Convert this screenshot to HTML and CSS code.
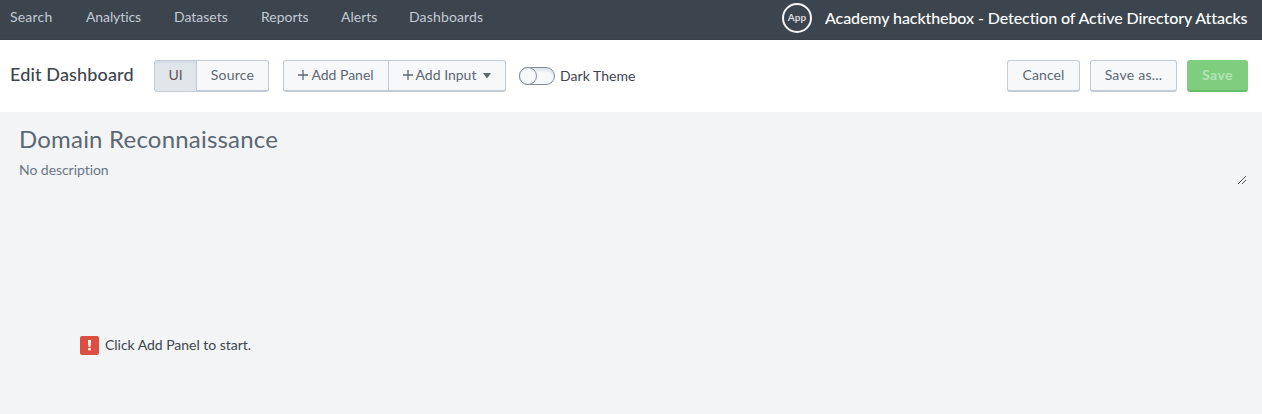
FILE: index.html
```html
<!DOCTYPE html>
<html lang="en">
<head>
<meta charset="utf-8">
<title>Edit Dashboard</title>
<link rel="stylesheet" href="styles.css">
</head>
<body>
<header class="appbar">
  <nav class="nav">
    <a class="nav-search">Search</a>
    <a class="nav-analytics">Analytics</a>
    <a class="nav-datasets">Datasets</a>
    <a class="nav-reports">Reports</a>
    <a class="nav-alerts">Alerts</a>
    <a class="nav-dashboards">Dashboards</a>
  </nav>
  <div class="app">
    <span class="app-icon">App</span>
    <span class="app-name">Academy hackthebox - Detection of Active Directory Attacks</span>
  </div>
</header>
<div class="toolbar">
  <h1 class="edit-title">Edit Dashboard</h1>
  <div class="group">
    <button class="btn btn-ui active">UI</button>
    <button class="btn btn-source">Source</button>
  </div>
  <div class="group group-add">
    <button class="btn btn-panel"><svg class="plus" viewBox="0 0 10 10"><path d="M5 0v10M0 5h10"/></svg><span>Add Panel</span></button>
    <button class="btn btn-input"><svg class="plus" viewBox="0 0 10 10"><path d="M5 0v10M0 5h10"/></svg><span>Add Input</span><svg class="caret" viewBox="0 0 8 5"><path d="M0 0h8L4.6 4.7q-.6.6-1.2 0z"/></svg></button>
  </div>
  <span class="switch"><span class="knob"></span></span>
  <span class="theme-label">Dark Theme</span>
  <div class="actions">
    <button class="btn btn-cancel">Cancel</button>
    <button class="btn btn-saveas">Save as...</button>
    <button class="btn btn-save">Save</button>
  </div>
</div>
<main class="content">
  <h2 class="title">Domain Reconnaissance</h2>
  <div class="description">
    <span class="description-text">No description</span>
    <svg class="grip" viewBox="0 0 8 8" shape-rendering="crispEdges"><path d="M0 7h1v1H0zM1 6h1v1H1zM2 5h1v1H2zM3 4h1v1H3zM4 3h1v1H4zM5 2h1v1H5zM6 1h1v1H6zM7 0h1v1H7zM4 7h1v1H4zM5 6h1v1H5zM6 5h1v1H6zM7 4h1v1H7z"/></svg>
  </div>
  <div class="message">
    <svg class="alert" viewBox="0 0 19 19"><rect width="19" height="19" rx="2"/><path d="M8 4h3l-.5 7h-2z"/><circle cx="9.5" cy="13.2" r="1.4"/></svg>
    <span class="message-text">Click Add Panel to start.</span>
  </div>
</main>
</body>
</html>
```
FILE: styles.css
```css
* { box-sizing: border-box; }
body {
  margin: 0;
  height: 414px;
  overflow: hidden;
  background: #f2f4f5;
  color: #3c444d;
  font: 14px/20px Lato, "Open Sans", sans-serif;
  font-variant-ligatures: none;
  white-space: nowrap;
}
h1, h2 { margin: 0; }
.appbar {
  display: flex;
  justify-content: space-between;
  height: 40px;
  padding: 0 14px 0 10px;
  background: #3c444d;
  border-bottom: 1px solid #384049;
}
.nav { display: flex; padding-top: 7px; color: #c3cbd4; }
.nav-search { width: 76px; letter-spacing: .2px; }
.nav-analytics { width: 88px; letter-spacing: -.1px; }
.nav-datasets { width: 87px; }
.nav-reports { width: 80px; }
.nav-alerts { width: 68px; }
.nav-dashboards { letter-spacing: .15px; }
.app { display: flex; padding-top: 3px; }
.app-icon {
  width: 30px;
  height: 30px;
  margin-right: 13px;
  border: 2px solid #f4f5f6;
  border-radius: 50%;
  color: #d8dbde;
  font-size: 10px;
  font-weight: 700;
  line-height: 25px;
  text-align: center;
}
.app-name {
  width: 423px;
  padding-top: 5px;
  color: #fff;
  font-size: 16px;
  font-weight: 500;
  letter-spacing: -.09px;
}
.toolbar {
  display: flex;
  height: 72px;
  padding: 20px 14px 0 10px;
  background: #fff;
}
.edit-title { width: 144px; font-size: 18px; font-weight: 500; line-height: 28px; letter-spacing: .15px; }
.group { display: flex; }
.group-add { margin-left: 14px; }
.btn {
  display: flex;
  align-items: center;
  justify-content: center;
  height: 32px;
  padding: 0 0 1px;
  border: 1px solid #c3cbd4;
  border-bottom-width: 2px;
  border-radius: 3px;
  background: #f7f8fa;
  color: #5c6773;
  font: inherit;
  font-variant-ligatures: none;
}
.group .btn:first-child { border-radius: 3px 0 0 3px; }
.group .btn:last-child { margin-left: -1px; border-radius: 0 3px 3px 0; }
.btn-ui { width: 43px; }
.btn-source { width: 73px; letter-spacing: .2px; }
.btn.active { padding-bottom: 2px; background: #e1e6eb; color: #625358; box-shadow: inset 0 2px 2px #d3dbe3; border-bottom-width: 1px; }
.btn-panel { width: 106px; }
.btn-input { width: 118px; }
.plus { width: 10px; height: 10px; margin-right: 3px; fill: none; stroke: #5c6773; stroke-width: 1.3; }
.caret { width: 8px; height: 5px; margin-left: 7px; fill: #5c6773; }
.switch {
  width: 36px;
  height: 18px;
  margin: 7px 5px 0 13px;
  border: 1px solid #818d99;
  border-radius: 9px;
  background: #f7f8fa;
  box-shadow: inset 0 3px 2px #e1e6eb;
}
.knob {
  display: block;
  width: 18px;
  height: 18px;
  margin: -1px;
  border: 1px solid #818d99;
  border-radius: 50%;
  background: #f7f8fa;
}
.theme-label { padding-top: 6px; letter-spacing: .05px; }
.actions { display: flex; gap: 10px; margin-left: auto; }
.btn-cancel { width: 73px; letter-spacing: .1px; }
.btn-saveas { width: 87px; letter-spacing: .25px; }
.btn-save {
  width: 61px;
  border-color: #7fcd7f;
  border-bottom-color: #6bbb6c;
  background: #7fcd7f;
  color: #b5e3b5;
  font-weight: 700;
  letter-spacing: .4px;
}
.content { height: 302px; padding: 12px 16px 0 19px; }
.title { height: 36px; color: #5c6773; font-size: 24px; font-weight: 400; line-height: 29px; letter-spacing: .2px; }
.description { display: flex; justify-content: space-between; height: 28px; color: #6b7785; }
.description-text { letter-spacing: -.05px; }
.grip { width: 8px; height: 8px; margin-top: 16px; fill: #555; }
.message { display: flex; padding: 148px 0 0 61px; }
.alert { width: 19px; height: 19px; margin: 0 6px 0 0; fill: #fff; }
.alert rect { fill: #dc4e41; }
.message-text { line-height: 17px; letter-spacing: -.03px; }
```
